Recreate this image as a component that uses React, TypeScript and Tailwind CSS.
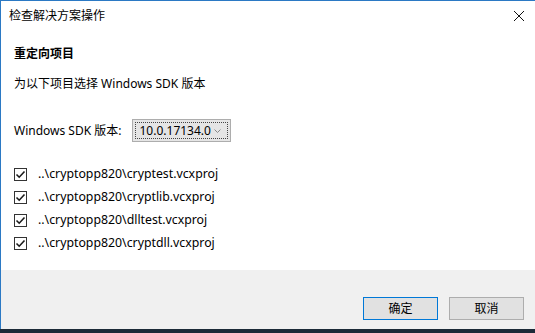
import React from 'react';

const projects = [
  '..\\cryptopp820\\cryptest.vcxproj',
  '..\\cryptopp820\\cryptlib.vcxproj',
  '..\\cryptopp820\\dlltest.vcxproj',
  '..\\cryptopp820\\cryptdll.vcxproj',
];

const font = { fontFamily: '"Noto Sans", "Noto Sans CJK SC", sans-serif' };

const CheckBox = () => (
  <div className="flex h-[13px] w-[13px] items-center justify-center border border-[#333333] bg-white">
    <svg width="11" height="11" viewBox="0 0 11 11">
      <path d="M1.5 5.5 L4.2 8.2 L9.5 2.5" fill="none" stroke="#1a1a1a" strokeWidth="1.6" />
    </svg>
  </div>
);

export default function App() {
  return (
    <div className="flex h-[333px] w-[535px] flex-col overflow-hidden bg-white text-[12px] text-black" style={font}>
      <div className="flex flex-1 flex-col border-l border-t border-[#2b79c4]">
        {/* title bar */}
        <div className="flex h-[30px] items-center justify-between pl-[8px] pr-[8px]">
          <span className="leading-none">检查解决方案操作</span>
          <svg width="14" height="14" viewBox="0 0 14 14" className="mr-[1px]">
            <path d="M2 2 L12 12 M12 2 L2 12" stroke="#111" strokeWidth="1" />
          </svg>
        </div>

        {/* body */}
        <div className="flex flex-1 flex-col pl-[13px]">
          <div className="mt-[13px] font-bold leading-[20px]">重定向项目</div>
          <div className="mt-[10px] leading-[20px]">为以下项目选择 Windows SDK 版本</div>

          <div className="mt-[25px] flex items-center gap-[10px]">
            <span>Windows SDK 版本:</span>
            <div className="flex h-[23px] w-[99px] items-center border border-[#adadad] bg-[#e5e5e5] p-[2px]">
              <div className="flex h-full flex-1 items-center justify-between border border-dotted border-[#444] pl-[4px] pr-[6px]">
                <span className="text-[12px] leading-none">10.0.17134.0</span>
                <svg width="7" height="4" viewBox="0 0 7 4">
                  <path d="M0.5 0.5 L3.5 3.5 L6.5 0.5" fill="none" stroke="#888" strokeWidth="1" />
                </svg>
              </div>
            </div>
          </div>

          <div className="mt-[24px] flex flex-col gap-[7px] text-[12.3px]">
            {projects.map((p) => (
              <div key={p} className="flex h-[16px] items-center gap-[11px]">
                <CheckBox />
                <span className="leading-none">{p}</span>
              </div>
            ))}
          </div>
        </div>

        {/* footer */}
        <div className="flex h-[59px] items-start justify-end gap-[11px] bg-[#f0f0f0] pr-[11px] pt-[27px]">
          <button className="h-[23px] w-[75px] border border-[#0078d7] bg-[#e1e1e1] leading-none">确定</button>
          <button className="h-[23px] w-[75px] border border-[#adadad] bg-[#e1e1e1] leading-none">取消</button>
        </div>
      </div>
      <div className="h-[4px] bg-[#1c2a38]" />
    </div>
  );
}
